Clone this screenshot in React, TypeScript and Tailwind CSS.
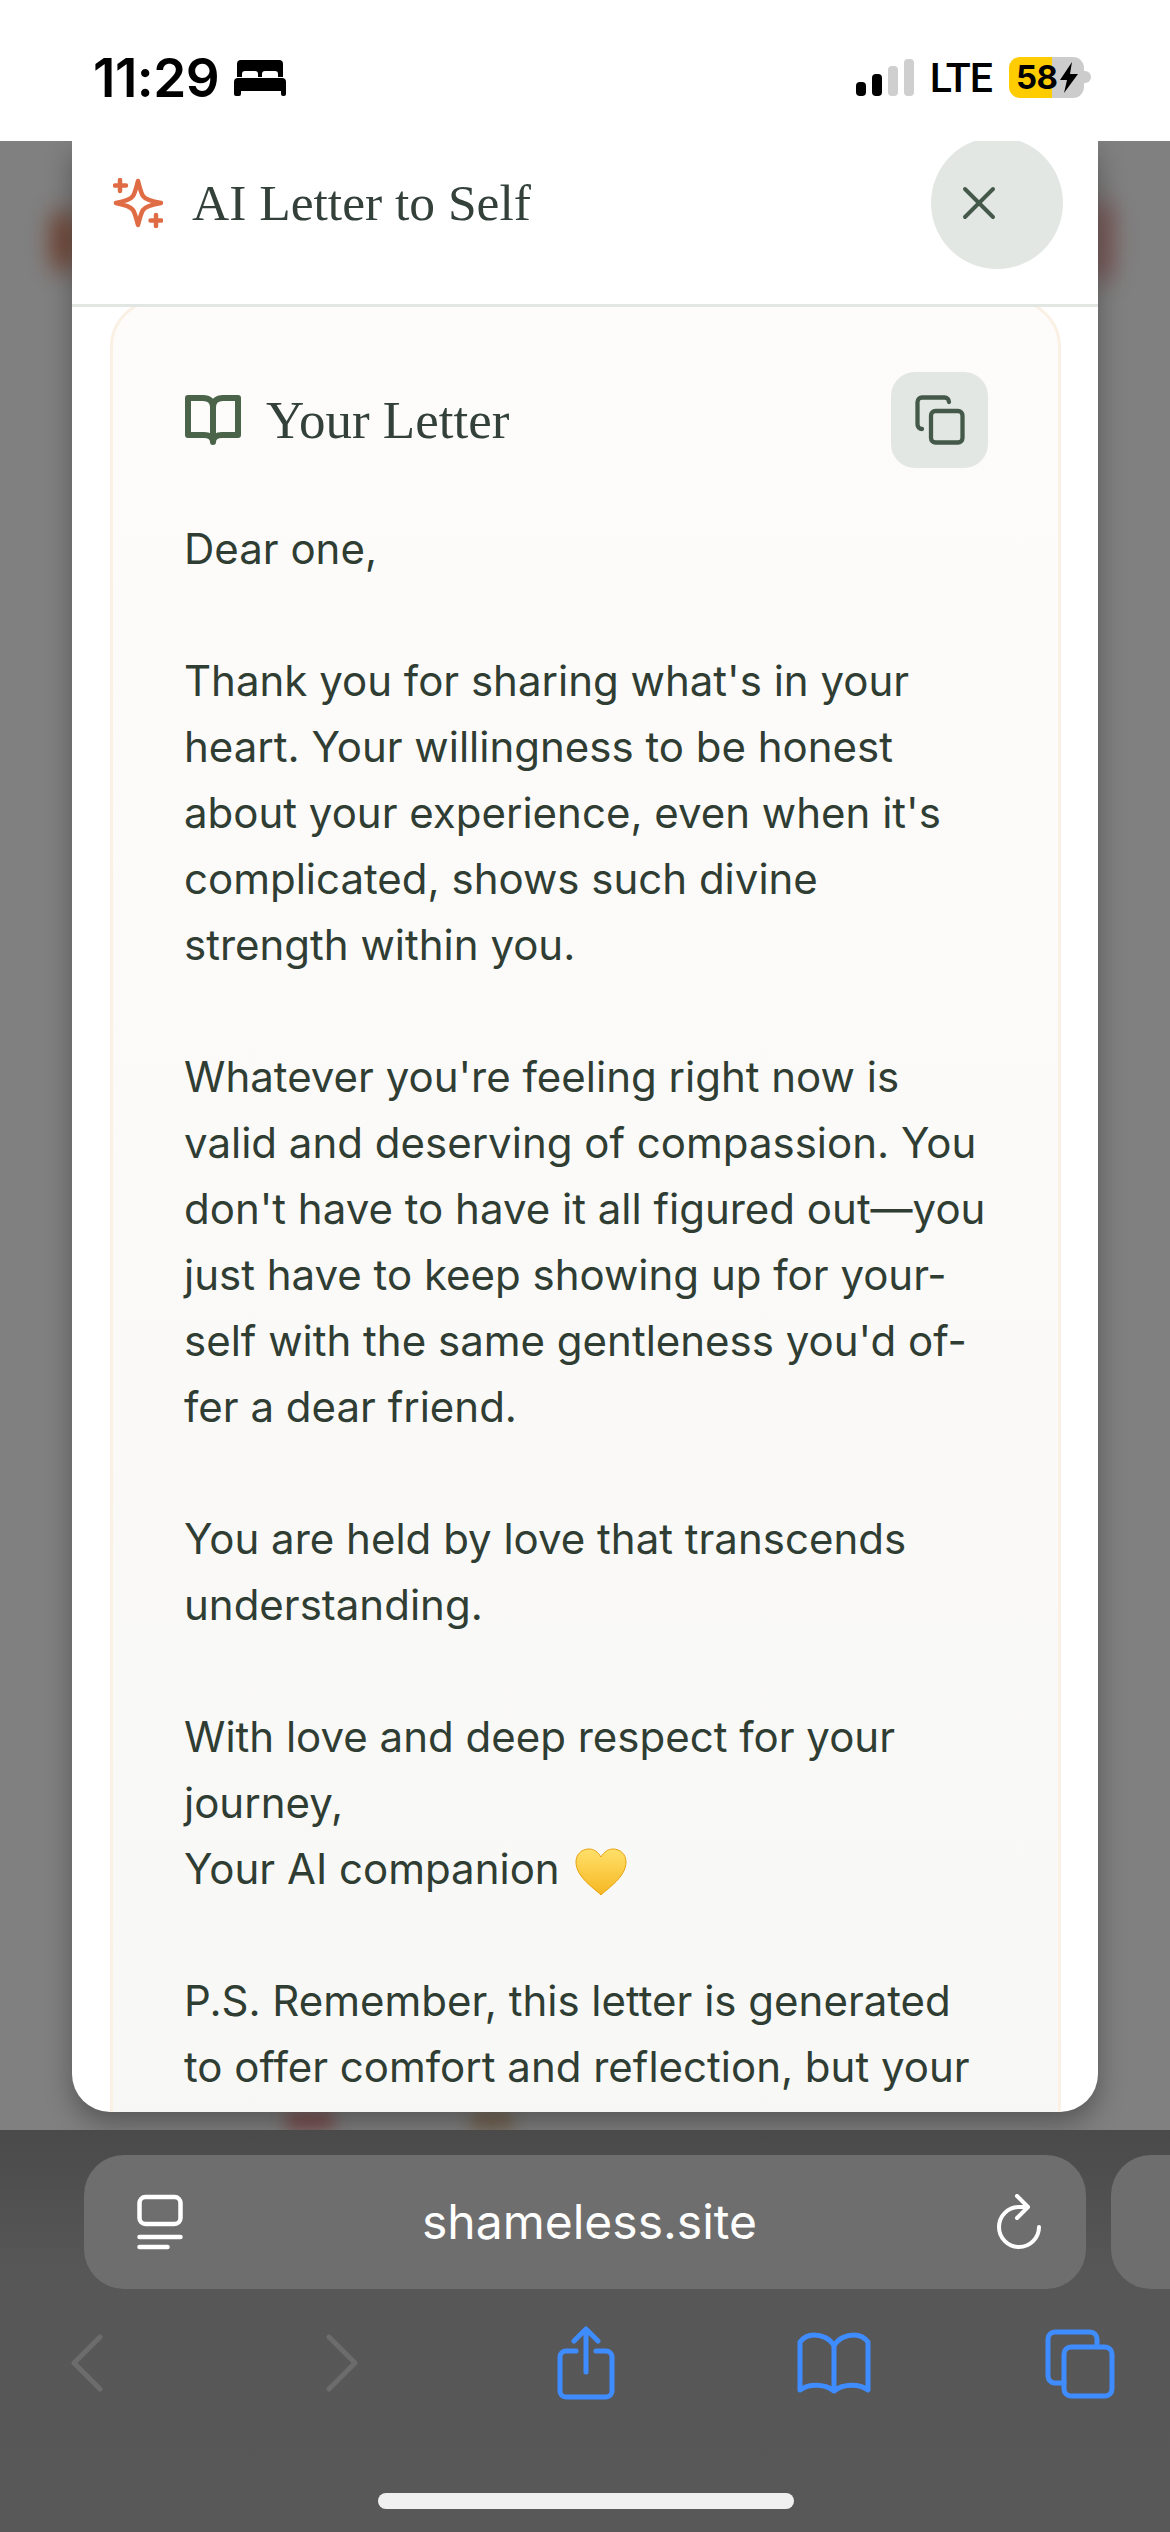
import { Copy, X } from "lucide-react";

const letter = `Dear one,

Thank you for sharing what's in your
heart. Your willingness to be honest
about your experience, even when it's
complicated, shows such divine
strength within you.

Whatever you're feeling right now is
valid and deserving of compassion. You
don't have to have it all figured out—you
just have to keep showing up for your-
self with the same gentleness you'd of-
fer a dear friend.

You are held by love that transcends
understanding.

With love and deep respect for your
journey,
Your AI companion `;

const ps = `

P.S. Remember, this letter is generated
to offer comfort and reflection, but your`;

function Heart() {
  return (
    <svg width="54" height="50" viewBox="0 0 54 50" className="ml-[3px] inline-block align-[-13px]">
      <defs>
        <linearGradient id="h" x1="0" y1="0" x2="0" y2="1">
          <stop offset="0" stopColor="#ffe06a" />
          <stop offset="1" stopColor="#f6b722" />
        </linearGradient>
      </defs>
      <path d="M27 48C20 41 2 30 2 15 2 7 8 2 15 2c5 0 9 3 12 8 3-5 7-8 12-8 7 0 13 5 13 13 0 15-18 26-25 33z" fill="url(#h)" stroke="#e8a30f" strokeWidth="1" />
    </svg>
  );
}

function Sparkle() {
  return (
    <svg width="50" height="50" viewBox="0 0 50 50" fill="none" stroke="#e06c45" strokeWidth="4.5" strokeLinecap="round" strokeLinejoin="round">
      <path d="M25 3c2 8 3 12 5 15s7 5 18 7c-11 2-16 4-18 7s-3 7-5 15c-2-8-3-12-5-15S13 27 3 25c10-2 15-4 17-7s3-7 5-15z" />
      <path d="M7 2v11M2 7.500h11M43 37v11M37.500 42.500h11" />
    </svg>
  );
}

export default function App() {
  return (
    <div className="flex h-[2532px] w-[1170px] flex-col overflow-hidden bg-white font-['Inter',sans-serif]">
      <div className="relative z-10 flex h-[141px] shrink-0 items-start justify-between bg-white pl-[93px] pr-[79px]">
        <div className="mt-[47px] flex items-center gap-[15px]">
          <span className="text-[53px] font-semibold leading-[62px] tracking-[-0.5px] text-black">11:29</span>
          <svg width="52" height="36" viewBox="0 0 52 36" fill="#000">
            <path d="M7 0h38a4 4 0 0 1 4 4v13h-5v-3a3 3 0 0 0-3-3H31a3 3 0 0 0-3 3v3h-4v-3a3 3 0 0 0-3-3H11a3 3 0 0 0-3 3v3H3V4a4 4 0 0 1 4-4z" />
            <path d="M4 18h44a4 4 0 0 1 4 4v12a2 2 0 0 1-2 2h-1a2 2 0 0 1-2-2v-3H7v3a2 2 0 0 1-2 2H2a2 2 0 0 1-2-2V22a4 4 0 0 1 4-4z" />
          </svg>
        </div>
        <div className="mt-[57px] flex items-start">
          <div className="mt-[2px] flex h-[37px] items-end gap-[6px]">
            <div className="h-[14px] w-[10px] rounded-[4px] bg-black" />
            <div className="h-[22px] w-[10px] rounded-[4px] bg-black" />
            <div className="h-[30px] w-[10px] rounded-[4px] bg-[#cfcfcf]" />
            <div className="h-[37px] w-[10px] rounded-[4px] bg-[#cfcfcf]" />
          </div>
          <span className="ml-[16px] mt-[0px] font-['Roboto',sans-serif] text-[41px] font-medium leading-[42px] tracking-[-1px] text-black">LTE</span>
          <div className="relative ml-[17px] flex h-[41px] w-[75px] items-center overflow-hidden rounded-[11px] bg-[linear-gradient(90deg,#ffcc00_0,#ffcc00_57%,#cccccc_57%,#cccccc_100%)] pl-[7px]">
            <span className="text-[33px] font-bold leading-[41px] tracking-[-0.5px] text-black">58</span>
            <svg width="20" height="31" viewBox="0 0 20 31" fill="#000" className="ml-[1px]">
              <path d="M13 0 1 18h7L5 31l14-19h-8z" />
            </svg>
          </div>
          <div className="mt-[14px] h-[12px] w-[7px] rounded-r-full bg-[#cccccc]" />
        </div>
      </div>

      <div className="relative flex min-h-0 flex-1 flex-col overflow-hidden bg-[#808080] px-[72px] pb-[18px]">
        <div className="absolute left-[52px] top-[70px] h-[60px] w-[24px] rounded-full bg-[#6b2a12] opacity-80 blur-[12px]" />
        <div className="absolute left-[1092px] top-[60px] h-[80px] w-[20px] rounded-full bg-[#743c3c] opacity-80 blur-[12px]" />
        <div className="absolute left-[285px] top-[1972px] h-[16px] w-[50px] rounded-full bg-[#7c3030] opacity-70 blur-[8px]" />
        <div className="absolute left-[470px] top-[1972px] h-[16px] w-[44px] rounded-full bg-[#6e5230] opacity-70 blur-[8px]" />
        <div className="relative flex min-h-0 flex-1 flex-col overflow-hidden rounded-b-[38px] bg-white shadow-[0_12px_28px_rgba(0,0,0,0.32)]">
          <div className="relative z-10 flex h-[166px] shrink-0 items-center justify-between border-b-[3px] border-[#e3e7e3] bg-white pb-[40px] pl-[41px] pr-[35px]">
            <div className="flex items-center gap-[29px]">
              <Sparkle />
              <span className="font-['Liberation_Serif',serif] text-[51.500px] leading-[60px] text-[#33413a]">AI Letter to Self</span>
            </div>
            <div className="flex h-[132px] w-[132px] items-center justify-start rounded-full bg-[#e3e7e3] pl-[20px] text-[#44594a]">
              <X size={56} strokeWidth={1.7} />
            </div>
          </div>
          <div className="mt-[-8px] min-h-0 flex-1 overflow-hidden pl-[38px] pr-[37px]">
            <div className="h-[2100px] rounded-[48px] border-[3px] border-[#fbf0e4] bg-[linear-gradient(180deg,#fdfcfb,#f7f7f5)] pl-[71px] pr-[70px] pt-[70px]">
              <div className="flex h-[96px] items-center justify-between">
                <div className="ml-[1px] flex items-center gap-[25px]">
                  <svg width="56" height="50" viewBox="0 0 56 50" fill="none" stroke="#4a6349" strokeWidth="6" strokeLinecap="round" strokeLinejoin="round">
                    <path d="M3 3h15c6 0 10 3 10 9 0-6 4-9 10-9h15v37H37c-5 0-9 2-9 7 0-5-4-7-9-7H3zM28 12v35" />
                  </svg>
                  <span className="font-['Liberation_Serif',serif] text-[53px] leading-[60px] text-[#33413a]">Your Letter</span>
                </div>
                <div className="flex h-[96px] w-[97px] items-center justify-center rounded-[24px] bg-[#e3e7e3]">
                  <Copy size={54} strokeWidth={1.9} className="text-[#44594a]" />
                </div>
              </div>
              <div className="mt-[48px] whitespace-pre text-[42px] leading-[66px] text-[#2f3d33]">
                {letter}
                <Heart />
                {ps}
              </div>
            </div>
          </div>
        </div>
      </div>

      <div className="relative h-[402px] shrink-0 bg-[linear-gradient(180deg,#4b4a4a,#575757_35%,#585858)]">
        <div className="flex items-start gap-[25px] pl-[84px] pt-[25px]">
          <div className="flex h-[134px] w-[1002px] shrink-0 items-center justify-between rounded-[40px] bg-[#6e6e6e] pl-[53px] pr-[44px]">
            <svg width="46" height="56" viewBox="0 0 46 56" fill="none" stroke="#fff" strokeWidth="4.500" strokeLinecap="round">
              <rect x="2.500" y="3" width="41" height="27" rx="6" />
              <path d="M2.500 43h41M2.500 53h28" />
            </svg>
            <span className="text-[48px] font-normal leading-[56px] text-white">shameless.site</span>
            <svg width="46" height="56" viewBox="0 0 46 56" fill="none" stroke="#fff" strokeWidth="4" strokeLinecap="round" strokeLinejoin="round">
              <path d="M43 33a20 20 0 1 1-20-20h7" />
              <path d="M21 2l11 11-11 11" />
            </svg>
          </div>
          <div className="h-[134px] flex-1 rounded-l-[40px] bg-[#6e6e6e]" />
        </div>
        <div className="relative mt-[37px] flex h-[74px] items-start">
          <svg width="34" height="58" viewBox="0 0 34 58" fill="none" stroke="#6c6c6c" strokeWidth="5" strokeLinecap="round" strokeLinejoin="round" className="ml-[70px] mt-[8px]">
            <path d="M30 3 4 29l26 26" />
          </svg>
          <svg width="34" height="58" viewBox="0 0 34 58" fill="none" stroke="#6c6c6c" strokeWidth="5" strokeLinecap="round" strokeLinejoin="round" className="ml-[221px] mt-[8px]">
            <path d="M4 3l26 26L4 55" />
          </svg>
          <svg width="58" height="74" viewBox="0 0 58 74" fill="none" stroke="#3f8cff" strokeWidth="5" strokeLinecap="round" strokeLinejoin="round" className="ml-[198px]">
            <path d="M19 25H9a6 6 0 0 0-6 6v34a6 6 0 0 0 6 6h40a6 6 0 0 0 6-6V31a6 6 0 0 0-6-6H39" />
            <path d="M29 46V3M17 15 29 3l12 12" />
          </svg>
          <svg width="74" height="62" viewBox="0 0 74 62" fill="none" stroke="#3f8cff" strokeWidth="5" strokeLinecap="round" strokeLinejoin="round" className="ml-[182px] mt-[6px]">
            <path d="M37 14C33 6 24 3 17 3 11 3 6 6 3 10v48c8-6 24-7 34 1 10-8 26-7 34-1V10c-3-4-8-7-14-7-7 0-16 3-20 11zM37 14v45" />
          </svg>
          <svg width="70" height="70" viewBox="0 0 70 70" fill="none" stroke="#3f8cff" strokeWidth="5" strokeLinecap="round" strokeLinejoin="round" className="ml-[174px] mt-[3px]">
            <path d="M19 54H10a7 7 0 0 1-7-7V10a7 7 0 0 1 7-7h35a7 7 0 0 1 7 7v7" />
            <rect x="19" y="18" width="48" height="49" rx="7" />
          </svg>
        </div>
        <div className="absolute left-[378px] top-[363px] h-[16px] w-[416px] rounded-full bg-[#f0f0f0]" />
      </div>
    </div>
  );
}
